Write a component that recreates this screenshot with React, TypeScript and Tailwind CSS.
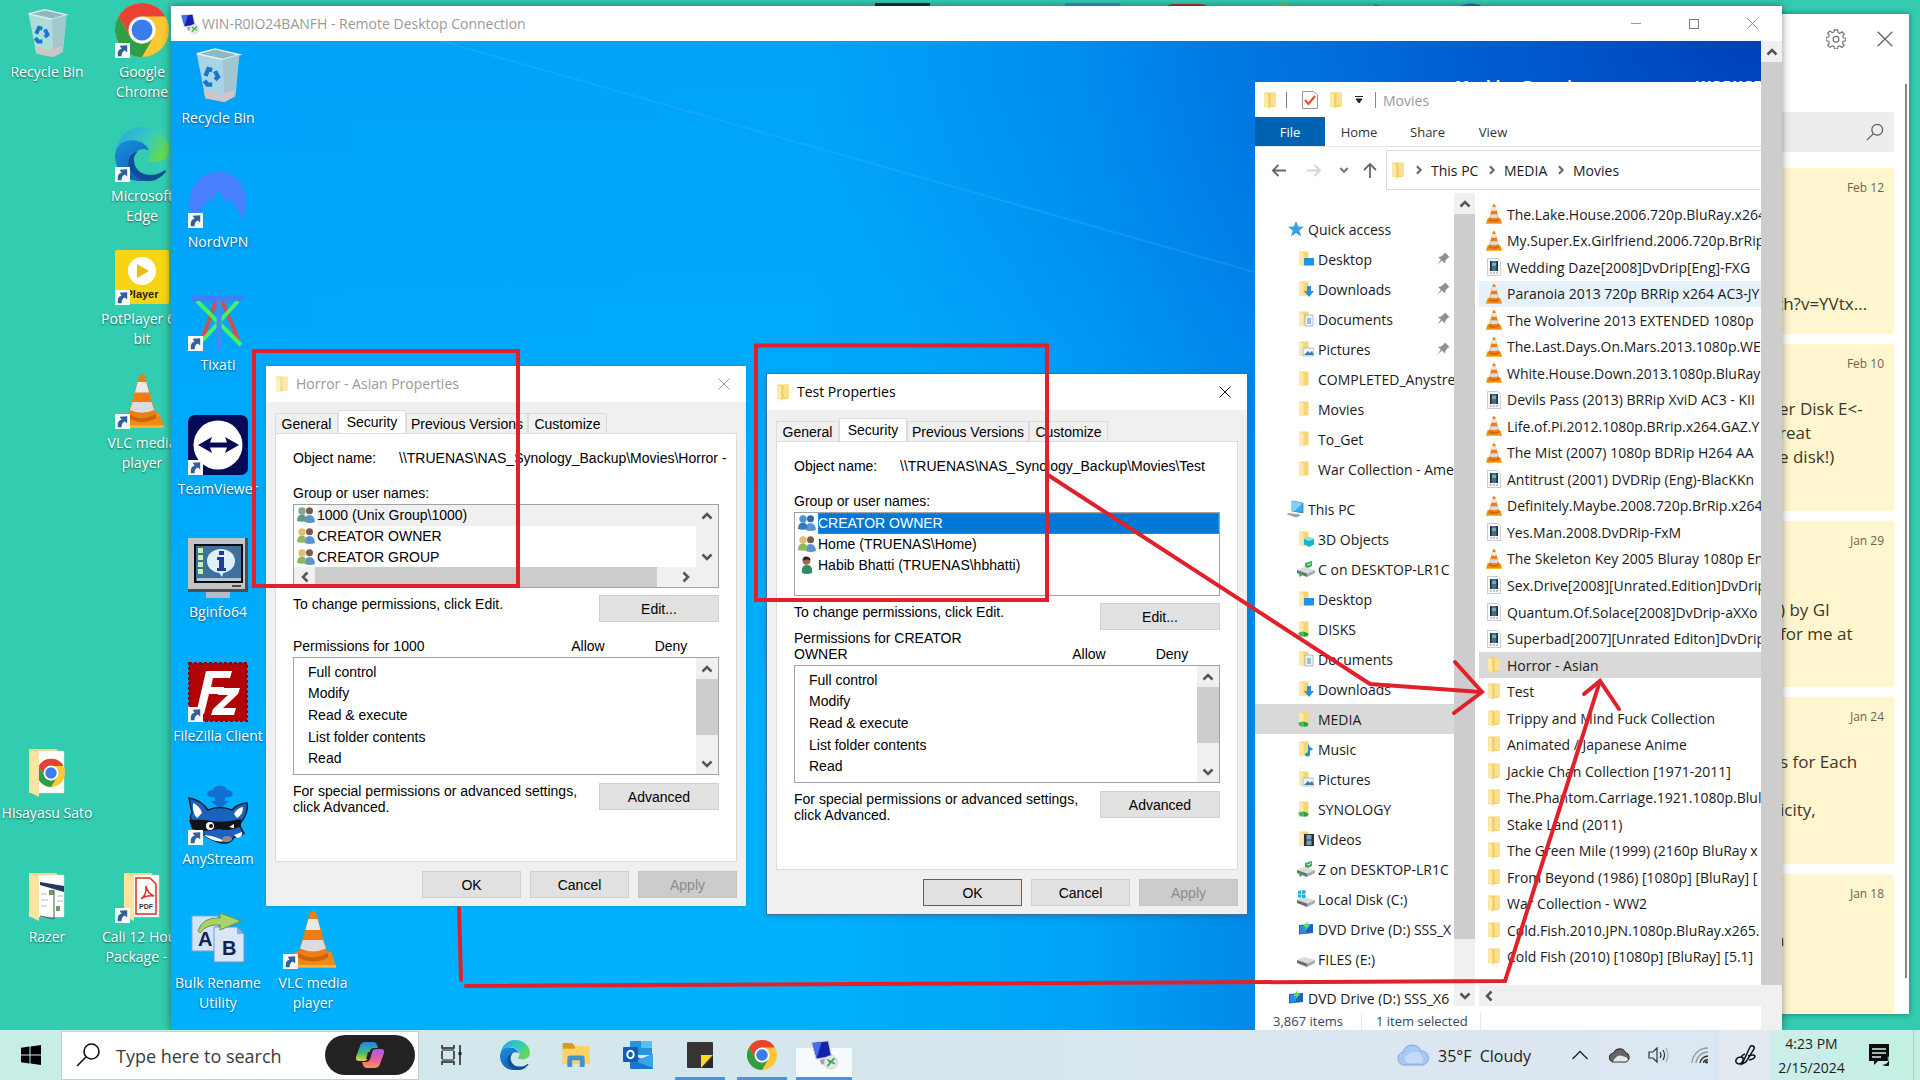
import React from "react";

const RED = "#e0212b";

/* ---------- icons ---------- */

function Folder({ className = "w-4 h-4" }: { className?: string }) {
  return (
    <svg viewBox="0 0 16 16" className={className} aria-hidden="true">
      <path d="M2 0.500h11v12.500l-1.500 1H2z" fill="#f3d06a" />
      <path d="M8 1h5v12H8z" fill="#fbe18c" />
      <path d="M2 0.500l4.500 2v13.200l-4.500-2.200z" fill="#fdeaa8" />
      <path d="M6.500 2.500v13" stroke="#e3bd52" strokeWidth="0.700" />
    </svg>
  );
}

function Cone({ className = "w-4 h-5" }: { className?: string }) {
  return (
    <svg viewBox="0 0 48 60" className={className} aria-hidden="true">
      <path d="M5 43h38l5 16H0z" fill="#f08a12" />
      <path d="M0 57h48v3H0z" fill="#ffb43a" />
      <path d="M9 44q15 10 30 0l1 5q-16 9-32 0z" fill="#c9640c" />
      <path d="M21 1.500q3-2 6 0l12 43q-15 8-30 0z" fill="#ee7d12" />
      <path d="M19.200 9h9.600l3 11.500H16.200z" fill="#e9e9ea" />
      <path d="M13.500 31h21l3 9q-13.500 6-27 0z" fill="#dcdcde" />
    </svg>
  );
}

function AviFile() {
  return (
    <svg viewBox="0 0 16 18" className="w-4 h-[18px]" aria-hidden="true">
      <path d="M1.500 0.500h10l3 3v14h-13z" fill="#fbfbfb" stroke="#b9c0c8" strokeWidth="0.800" />
      <path d="M4 3h8v10H4z" fill="#3c6f93" />
      <path d="M4 3h1.500v10H4zM10.500 3H12v10h-1.500z" fill="#23282e" />
      <path d="M6 5h4v3H6z" fill="#79a7bf" />
      <path d="M4 15h8" stroke="#8a8f95" strokeDasharray="2 1" />
    </svg>
  );
}

function Chrome({ className = "w-9 h-9" }: { className?: string }) {
  return (
    <svg viewBox="0 0 48 48" className={className} aria-hidden="true">
      <circle cx="24" cy="24" r="24" fill="#fcc934" />
      <path d="M24 12h20.800A24 24 0 0 0 3.200 12l10.400 18z" fill="#ea4335" />
      <path d="M3.200 12A24 24 0 0 0 24 48l10.400-18A12 12 0 0 1 13.600 30z" fill="#2f9e44" />
      <circle cx="24" cy="24" r="12" fill="#fff" />
      <circle cx="24" cy="24" r="9.300" fill="#3b7ded" />
    </svg>
  );
}

function Edge({ className = "w-8 h-8", id }: { className?: string; id: string }) {
  return (
    <svg viewBox="0 0 48 48" className={className} aria-hidden="true">
      <defs>
        <linearGradient id={id + "a"} x1="0" y1="0" x2="1" y2="0.500">
          <stop offset="0" stopColor="#29a8e6" />
          <stop offset="0.600" stopColor="#35c9c0" />
          <stop offset="1" stopColor="#63d957" />
        </linearGradient>
        <linearGradient id={id + "b"} x1="0" y1="0" x2="0.600" y2="1">
          <stop offset="0" stopColor="#1a8fe0" />
          <stop offset="1" stopColor="#0f5fb6" />
        </linearGradient>
      </defs>
      <path d="M1 22C2 9 12 0 24 0c14 0 24 10 24 20 0 7-5 11-12 11-5 0-8-1-7-3 3-3 3-8 0-11C22 8 6 11 1 22z" fill={"url(#" + id + "a)"} />
      <path d="M0 25C1 15 9 11 17 12c7 0 12 5 13 9-7-4-14 1-13 9 1 9 9 15 18 15-4 2-8 3-12 3C9 48 0 38 0 25z" fill={"url(#" + id + "b)"} />
      <path d="M20 22c-5 5-5 13 2 18 7 4 15 3 21-1 2-1 3 0 2 1-4 5-9 8-15 8-12-1-19-9-18-18 1-5 4-7 8-8z" fill="#0c4f95" />
    </svg>
  );
}

function RecycleBin({ className }: { className: string }) {
  return (
    <svg viewBox="0 0 48 58" className={className} aria-hidden="true">
      <path d="M2 8l9 46 20 4 11-6 4-42-24-5z" fill="#c5dde2" fillOpacity="0.850" />
      <path d="M2 8l19-5 25 6-17 5z" fill="#8fb8bf" stroke="#e3f1f4" strokeWidth="1.500" />
      <path d="M29 14l17-5-5 43-10 6z" fill="#9fc2c9" fillOpacity="0.800" />
      <path d="M9 46l19 4 13-5-1 8-10 5-19-4z" fill="#cfc6c6" />
      <g fill="none" stroke="#1478cc" strokeWidth="4.500">
        <path d="M11 31l3-7 4 1" />
        <path d="M21 26l3 6-3 3" />
        <path d="M18 40h-5l-3-4" />
      </g>
    </svg>
  );
}

function NordVpn() {
  return (
    <svg viewBox="0 0 60 60" className="w-[60px] h-[60px]" aria-hidden="true">
      <path d="M5 52C-4 30 6 4 30 4s34 26 25 48L43 30l-4 6-9-15-5 13-3-4z" fill="#4a80ff" />
    </svg>
  );
}

function Tixati() {
  return (
    <svg viewBox="0 0 60 60" className="w-[60px] h-[60px]" aria-hidden="true">
      <g strokeWidth="4" fill="none">
        <path d="M28 10L13 52M34 10l16 38" stroke="#d2504a" />
        <path d="M9 10l44 44M50 10L14 50" stroke="#49f067" />
        <path d="M31 8v50" stroke="#3f8cf5" strokeWidth="5" />
      </g>
      <path d="M4 4h52v6H4z" fill="#3d82f3" />
    </svg>
  );
}

function TeamViewer() {
  return (
    <svg viewBox="0 0 60 60" className="w-[60px] h-[60px]" aria-hidden="true">
      <rect width="60" height="60" rx="7" fill="#040a55" />
      <circle cx="30" cy="30" r="24.500" fill="#fff" />
      <path d="M10 30l14-8-2 5.500h17L37 22l14 8-14 8 2-5.500H22l2 5.500z" fill="#040a55" />
    </svg>
  );
}

function BgInfo() {
  return (
    <svg viewBox="0 0 60 60" className="w-[60px] h-[60px]" aria-hidden="true">
      <path d="M0 0h60v54H0z" fill="#4a4f55" />
      <path d="M0 0h57v51H0z" fill="#c4c4c4" />
      <path d="M6 6h49v39H6z" fill="#0b0b0c" />
      <path d="M8 8h45v35H8z" fill="#3e709d" />
      <path d="M9 40h44v3H9z" fill="#b9c6d0" />
      <path d="M10 10h5v5h-5zM10 17h5v5h-5zM10 24h5v5h-5zM10 31h5v5h-5z" fill="#c7f2b0" />
      <ellipse cx="33" cy="23" rx="14" ry="12" fill="#dff0fb" />
      <path d="M30 33l4 6 2-6z" fill="#dff0fb" />
      <path d="M31 13h5v4h-5zM29 19h7v11h2v3h-9v-3h2v-8h-2z" fill="#1c3f94" />
      <path d="M44 48h9" stroke="#4b4b4b" strokeWidth="2" />
      <path d="M18 54h24v6H18z" fill="#b4bcc4" />
    </svg>
  );
}

function FileZilla() {
  return (
    <svg viewBox="0 0 60 60" className="w-[60px] h-[60px]" aria-hidden="true">
      <rect x="1" y="1" width="58" height="58" fill="#b00406" />
      <rect x="1" y="1" width="58" height="58" fill="none" stroke="#8e0407" strokeWidth="3" strokeDasharray="3 2" />
      <path d="M18 9h26l-2 7H25l-2 9h13l-2 7H21l-5 20H8z" fill="#fff" />
      <path d="M32 26h20l-2 6-15 14h13l-2 7H23l2-6 15-14H30z" fill="#fff" />
    </svg>
  );
}

function AnyStream() {
  return (
    <svg viewBox="0 0 60 60" className="w-[60px] h-[60px]" aria-hidden="true">
      <path d="M19 10a6 6 0 0 1 6-5 8 8 0 0 1 14 0 6 6 0 0 1 6 5q-3 3-8 2v4h4l-9 8-9-8h4v-4q-5 1-8-2z" fill="#146fd2" />
      <path d="M1 13q12 2 19 12 12-5 24 0Q49 19 59 18q2 10-8 22l5 8q-6 5-10 4-4 9-16 5-12-4-20-12Q-1 33 4 28z" fill="#1b62bd" stroke="#15202e" strokeWidth="1.500" />
      <path d="M5 18q7 3 9 10l-5 5q-5-5-4-15zM55 22q-6 1-9 7l3 4q6-3 6-11z" fill="#fff" />
      <path d="M1 35q15-1 22 1 15 2 30-2v7q-12 6-22 3-18 4-27 0z" fill="#131417" />
      <circle cx="22" cy="41" r="4" fill="#fff" />
      <circle cx="23" cy="41" r="2" fill="#131417" />
      <path d="M41 42l5-3v4z" fill="#fff" />
      <path d="M16 50q12 1 20 6-10 2-20-6zM46 50l8-3q1 5-5 6z" fill="#fff" />
      <ellipse cx="39" cy="54" rx="5" ry="3" fill="#8e8a8a" />
    </svg>
  );
}

function BulkRename() {
  return (
    <svg viewBox="0 0 60 60" className="w-[60px] h-[60px]" aria-hidden="true">
      <path d="M4 7h26v35H4z" fill="#d3e3f8" stroke="#7fa7d6" />
      <path d="M26 18h23l7 7v28H26z" fill="#d9e6fa" stroke="#6f95c9" />
      <path d="M49 18v7h7z" fill="#87b0e2" />
      <text x="10" y="37" fontFamily="Liberation Sans" fontWeight="700" fontSize="20" fill="#14224e">A</text>
      <text x="34" y="46" fontFamily="Liberation Sans" fontWeight="700" fontSize="20" fill="#14224e">B</text>
      <path d="M10 22Q14 8 32 9V4l21 8-21 9v-5Q18 15 12 24z" fill="#a9d36a" stroke="#6f9440" />
    </svg>
  );
}

function PotPlayer() {
  return (
    <svg viewBox="0 0 54 54" className="w-[54px] h-[54px]" aria-hidden="true">
      <rect width="54" height="54" rx="2" fill="#f7d514" />
      <circle cx="27" cy="21" r="14" fill="#fff" />
      <path d="M22 14l12 7-12 7z" fill="#e8bf10" />
      <text x="27" y="48" textAnchor="middle" fontFamily="Liberation Sans" fontWeight="700" fontSize="11" fill="#2a2508">Player</text>
    </svg>
  );
}

function BigFolder({ kind }: { kind: "chrome" | "docs" | "pdf" }) {
  return (
    <svg viewBox="0 0 54 54" className="mt-1 w-[54px] h-[54px]" aria-hidden="true">
      <path d="M9 3h28v44H9z" fill="#f3d583" />
      <path d="M18 5h26v42H18z" fill="#fdfdfb" stroke="#d9d9d2" strokeWidth="0.500" />
      {kind === "chrome" && (
        <g>
          <circle cx="31" cy="27" r="14" fill="#fcc934" />
          <path d="M31 20h12.500A14 14 0 0 0 18.900 20L25 31z" fill="#e34133" />
          <path d="M18.900 20A14 14 0 0 0 31 41l6-10A7 7 0 0 1 25 31z" fill="#2f9e44" />
          <circle cx="31" cy="27" r="7.500" fill="#fff" />
          <circle cx="31" cy="27" r="5.700" fill="#3b7ded" />
        </g>
      )}
      {kind === "docs" && (
        <g>
          <path d="M20 12l24 4v6l-24-7z" fill="#1d3a5c" />
          <path d="M29 20h5v5h-5zM36 36h4v5h-4z" fill="#6d9c68" />
          <path d="M21 24h6M21 30h7M21 36h6M37 26h6M37 31h6" stroke="#b7bec7" />
          <path d="M20 46l14 3V20" stroke="#4c5a68" fill="none" />
        </g>
      )}
      {kind === "pdf" && (
        <g>
          <path d="M21 8h14l6 6v30H21z" fill="#fff" stroke="#dd2c25" strokeWidth="1.500" />
          <path d="M26 29q6-4 5-13 2 8 8 10-8-1-13 3z" fill="none" stroke="#dd2c25" strokeWidth="1.500" />
          <text x="31" y="39" textAnchor="middle" fontFamily="Liberation Sans" fontWeight="700" fontSize="7" fill="#333">PDF</text>
        </g>
      )}
      <path d="M9 3l10 5v43L9 46z" fill="#fbe3a0" />
    </svg>
  );
}

function RdpIcon({ className = "w-5 h-5" }: { className?: string }) {
  return (
    <svg viewBox="0 0 28 30" className={className} aria-hidden="true">
      <path d="M0 1.500L18.500 0l3.500 17-17 3z" fill="#c3c9d6" />
      <path d="M1.500 2.500L17.500 1l3 15-14.500 2.500z" fill="#1420b0" />
      <path d="M1.500 2.500L11 1.600 6 18z" fill="#4a6de8" />
      <path d="M9 20l8-1 2 4-8 2z" fill="#9aa3ad" />
      <circle cx="20.500" cy="22.500" r="7" fill="#e3e9e4" stroke="#b6bcb8" strokeWidth="0.600" />
      <path d="M17 19.500l3.500 3-3.500 4M24.500 18.500L21 21.500l3.500 3" stroke="#3aa544" strokeWidth="1.800" fill="none" />
    </svg>
  );
}

function Chevron({ dir, className = "w-3 h-3", color = "#555" }: { dir: "up" | "down" | "left" | "right"; className?: string; color?: string }) {
  const d = { up: "M1.500 8.500L6 4l4.500 4.500", down: "M1.500 3.500L6 8l4.500-4.500", left: "M8.500 1.500L4 6l4.500 4.500", right: "M3.500 1.500L8 6l-4.500 4.500" }[dir];
  return (
    <svg viewBox="0 0 12 12" className={className} aria-hidden="true">
      <path d={d} fill="none" stroke={color} strokeWidth="2.500" />
    </svg>
  );
}

function CloseX({ size = "w-3 h-3", color }: { size?: string; color: string }) {
  return (
    <svg viewBox="0 0 12 12" className={size} aria-hidden="true">
      <path d="M0.500 0.500l11 11M11.500 0.500l-11 11" stroke={color} strokeWidth="1" />
    </svg>
  );
}

function People({ tone }: { tone: "blend" | "group" | "single" | "blue" }) {
  const left = { blend: "#5b9a8e", group: "#8fb65a", single: "#2f8a63", blue: "#2f7cc0" }[tone];
  const head = { blend: "#8ba58f", group: "#e0bd7c", single: "#9a6a4a", blue: "#4f93cc" }[tone];
  if (tone === "single")
    return (
      <svg viewBox="0 0 18 18" className="w-[18px] h-[18px]" aria-hidden="true">
        <path d="M4 17q-1-8 5-8t5 8q-5 2-10 0z" fill={left} />
        <circle cx="8.500" cy="5" r="3.800" fill={head} />
        <path d="M4.500 5q0-5 4-4.500t4 4q-4-2-8 .5z" fill="#2b2320" />
      </svg>
    );
  return (
    <svg viewBox="0 0 18 18" className="w-[18px] h-[18px]" aria-hidden="true">
      <circle cx="12.500" cy="4.800" r="3.500" fill={tone === "blue" ? "#2c67a3" : "#7a5a48"} />
      <path d="M7.500 16q0-7 5-7t5.500 7q-5 2-10.500 0z" fill="#5f93cf" />
      <circle cx="5" cy="5" r="3.700" fill={head} />
      <path d="M0 15q0-6.500 5-6.500t4 6.500q-4 1.500-9 0z" fill={left} />
    </svg>
  );
}

function Pin() {
  return (
    <svg viewBox="0 0 14 14" className="w-3.5 h-3.5" aria-hidden="true">
      <path d="M9 0.500L13.500 5l-1.500.8-2.500 2.700-.5 3L5.800 8.600 1 13l3.800-5.400L2 5l3-.5L8 2z" fill="#8c8f93" />
    </svg>
  );
}

type NavKind = "star" | "folder" | "desktop" | "downloads" | "documents" | "pictures" | "pc" | "cube" | "netdrive" | "share" | "music" | "videos" | "windisk" | "dvd" | "disk";

function NavIcon({ kind }: { kind: NavKind }) {
  if (kind === "star")
    return (
      <svg viewBox="0 0 16 16" className="w-4 h-4" aria-hidden="true">
        <path d="M8 0l2.200 5.500 5.800.2-4.600 3.700 1.800 6.100L8 12l-5 3.500 1.600-6L0 5.700l5.800-.2z" fill="#35a2e4" />
      </svg>
    );
  if (kind === "pc")
    return (
      <svg viewBox="0 0 18 18" className="w-[18px] h-[18px]" aria-hidden="true">
        <path d="M5 1l11 2v10L5 11z" fill="#35aef0" stroke="#4c6f88" strokeWidth="0.800" />
        <path d="M5 1l11 2-9 8.400L5 11z" fill="#7fd0fa" />
        <path d="M1 13l10 1 3 1.500-5 2-9-3z" fill="#93a7b5" />
      </svg>
    );
  if (kind === "disk" || kind === "windisk" || kind === "netdrive")
    return (
      <svg viewBox="0 0 18 18" className="w-[18px] h-[18px]" aria-hidden="true">
        <path d="M0 10l7-3 11 3-8 3.500z" fill="#d9dcdf" />
        <path d="M0 10l10 3.500v3.500L0 13z" fill="#6a6e73" />
        <path d="M10 13.500l8-3.500v3l-8 4z" fill="#a9adb1" />
        {kind === "windisk" && <path d="M1 1l3-.4v3.200H1zM4.700.5L8.500 0v3.800H4.700zM1 4.500h3v3.200L1 7.300zM4.700 4.500h3.800v3.800l-3.800-.5z" fill="#12b0e6" />}
        {kind === "netdrive" && <path d="M8 3l7-2v5l-4 2-3-1zM1 12l6 2-4 3z" fill="#3eaf4a" />}
        {kind === "netdrive" && <path d="M10 4l2 1 2-2" stroke="#eef" fill="none" />}
      </svg>
    );
  if (kind === "dvd")
    return (
      <svg viewBox="0 0 16 16" className="w-4 h-4" aria-hidden="true">
        <path d="M1 4l14-1v9l-14 1.500z" fill="#1d63c4" />
        <path d="M2 5l6-.4v7.700l-6 .5z" fill="#2f8ce0" />
        <path d="M10 0l-5 6h3l-1 4 5-6H9z" fill="#4ee06a" />
      </svg>
    );
  return (
    <svg viewBox="0 0 16 16" className="w-4 h-4" aria-hidden="true">
      <path d="M1 0.500h9.500v14H1z" fill="#f5d673" />
      <path d="M1 0.500l4.500 2v13L1 13.500z" fill="#fdeaa8" />
      {kind === "desktop" && <path d="M6 7h10v7.500H6z" fill="#1d93e6" />}
      {kind === "downloads" && <path d="M9 5h4v5h3l-5 6-5-6h3z" fill="#2c8edb" />}
      {kind === "documents" && (
        <g>
          <path d="M7 4h8v11H7z" fill="#eef3f7" stroke="#93a4b2" strokeWidth="0.700" />
          <path d="M9 8h4M9 10h4M9 12h4" stroke="#4c88b8" />
        </g>
      )}
      {kind === "pictures" && (
        <g>
          <path d="M5 7h11v8H5z" fill="#e9f3fa" stroke="#9ab2c4" strokeWidth="0.700" />
          <path d="M6 14l4-4 2 2 2-2 2 4z" fill="#3d7ab0" />
        </g>
      )}
      {kind === "cube" && (
        <g>
          <path d="M6 8l5-2 5 2v5.500l-5 2.500-5-2.500z" fill="#19b3d8" />
          <path d="M6 8l5 2 5-2-5-2z" fill="#8be6f5" />
        </g>
      )}
      {kind === "share" && (
        <g>
          <path d="M0 12q5-3 10 0v3.500H2z" fill="#49b94f" />
          <path d="M6 11l5 2-5 3z" fill="#2f9a3b" />
        </g>
      )}
      {kind === "music" && <path d="M10 3q1 3 5 5-1 2-3 1v4.500a2.500 2 0 1 1-2-2z" fill="#1492dd" />}
      {kind === "videos" && (
        <g>
          <path d="M6 3h10v12H6z" fill="#2b323a" />
          <path d="M8.500 4h5v4.500h-5zM8.500 9.500h5V14h-5z" fill="#7c9fc4" />
        </g>
      )}
    </svg>
  );
}

/* ---------- desktop shortcuts ---------- */

type Shortcut = { label: string; icon: React.ReactNode; link?: boolean; row: number };

function ShortcutArrow() {
  return (
    <svg viewBox="0 0 16 16" className="absolute bottom-0 left-0 w-[15px] h-[15px]" aria-hidden="true">
      <path d="M0 0h16v16H0z" fill="#f7f9fb" />
      <path d="M3 14q-1-7 4-8L5 3l8-.5V10L10.500 8Q7 9 7 14z" fill="#345f9f" />
    </svg>
  );
}

function ShortcutColumn({ items, iconBox, className }: { items: Shortcut[]; iconBox: string; className: string }) {
  const rows: (Shortcut | null)[] = Array.from({ length: 8 }, (_, i) => items.find((s) => s.row === i) ?? null);
  return (
    <div className={"absolute grid h-[988px] w-28 grid-rows-8 text-center text-[14px] leading-[20px] text-white " + className}>
      {rows.map((s, i) =>
        s ? (
          <button key={i} type="button" className="flex min-w-0 flex-col items-center justify-start">
            <span className={"relative flex shrink-0 items-center justify-center " + iconBox}>
              {s.icon}
              {s.link && <ShortcutArrow />}
            </span>
            <span className="whitespace-pre pt-1 [text-shadow:0_1px_2px_rgba(0,0,0,.55)]">{s.label}</span>
          </button>
        ) : (
          <span key={i} />
        ),
      )}
    </div>
  );
}

const outerA: Shortcut[] = [
  { row: 0, label: "Recycle Bin", icon: <RecycleBin className="mt-1 w-[43px] h-[50px]" /> },
  { row: 6, label: "Hisayasu Sato", icon: <BigFolder kind="chrome" /> },
  { row: 7, label: "Razer", icon: <BigFolder kind="docs" /> },
];
const outerB: Shortcut[] = [
  { row: 0, label: "Google\nChrome", icon: <Chrome className="w-[54px] h-[54px]" />, link: true },
  { row: 1, label: "Microsoft\nEdge", icon: <Edge id="deskEdge" className="w-[54px] h-[54px]" />, link: true },
  { row: 2, label: "PotPlayer 64\nbit", icon: <PotPlayer />, link: true },
  { row: 3, label: "VLC media\nplayer", icon: <Cone className="w-11 h-[54px]" />, link: true },
  { row: 7, label: "Cali 12 Hour\nPackage - S", icon: <BigFolder kind="pdf" />, link: true },
];
const innerA: Shortcut[] = [
  { row: 0, label: "Recycle Bin", icon: <RecycleBin className="w-12 h-[56px]" /> },
  { row: 1, label: "NordVPN", icon: <NordVpn />, link: true },
  { row: 2, label: "Tixati", icon: <Tixati />, link: true },
  { row: 3, label: "TeamViewer", icon: <TeamViewer />, link: true },
  { row: 4, label: "Bginfo64", icon: <BgInfo /> },
  { row: 5, label: "FileZilla Client", icon: <FileZilla />, link: true },
  { row: 6, label: "AnyStream", icon: <AnyStream />, link: true },
  { row: 7, label: "Bulk Rename\nUtility", icon: <BulkRename /> },
];
const innerB: Shortcut[] = [{ row: 7, label: "VLC media\nplayer", icon: <Cone className="w-[46px] h-[58px]" />, link: true }];

/* ---------- properties dialogs ---------- */

type DialogProps = {
  title: string;
  path: string;
  active: boolean;
  subject: string;
  users: { name: string; tone: "blend" | "group" | "single" | "blue" }[];
  className: string;
};

function ScrollColumn({ thumb }: { thumb: boolean }) {
  return (
    <div className="flex w-[22px] shrink-0 flex-col items-center bg-[#f0f0f0]">
      <span className="flex h-[21px] items-center"><Chevron dir="up" /></span>
      {thumb && <span className="h-14 w-full bg-[#cdcdcd]" />}
      <span className="mt-auto flex h-[21px] items-center"><Chevron dir="down" /></span>
    </div>
  );
}

const dialogButton = "h-[27px] border border-[#cfcfcf] bg-[#e1e1e1] text-center";

function PropertiesDialog({ title, path, active, subject, users, className }: DialogProps) {
  const tabs = [
    { name: "General", w: "w-[63px]" },
    { name: "Security", w: "w-[68px]" },
    { name: "Previous Versions", w: "w-[122px]" },
    { name: "Customize", w: "w-[79px]" },
  ];
  return (
    <section
      aria-label={title}
      className={
        "absolute flex h-[540px] w-[480px] flex-col bg-[#f0f0f0] font-['Liberation_Sans',Arial,sans-serif] text-[14px] leading-4 text-black " +
        (active ? "shadow-[0_0_0_1px_#3f6f95,0_2px_8px_rgba(0,0,0,.2)] " : "shadow-[0_0_3px_rgba(0,0,0,.15)] ") +
        className
      }
    >
      <header className={"flex h-9 items-center bg-white pl-2 pr-4 font-['Open_Sans',sans-serif] text-[14px] " + (active ? "text-black" : "text-[#999]")}>
        <Folder className={active ? "w-[17px] h-[17px]" : "w-[17px] h-[17px] opacity-70"} />
        <h2 className="ml-[5px]">{title}</h2>
        <button type="button" aria-label="Close" className="ml-auto"><CloseX color={active ? "#111" : "#999"} /></button>
      </header>
      <div className="flex h-[31px] items-end px-[9px]" role="tablist">
        {tabs.map((t) => (
          <button
            key={t.name}
            type="button"
            role="tab"
            aria-selected={t.name === "Security"}
            className={
              "whitespace-nowrap border border-[#dcdcdc] " +
              t.w +
              (t.name === "Security" ? " h-[23px] border-b-0 bg-white" : " h-[20px] border-b-0 pt-px")
            }
          >
            {t.name}
          </button>
        ))}
      </div>
      <div className="mx-[9px] flex h-[429px] flex-col border border-[#dcdcdc] bg-white px-[17px] pt-[14px]">
        <p className="flex h-5 items-center whitespace-nowrap">
          <span className="w-[106px] shrink-0">Object name:</span>
          {path}
        </p>
        <p className="mt-[15px] flex h-5 items-center">Group or user names:</p>
        <div className="mt-px flex h-[84px] flex-col border border-[#9fa3a8]">
          <div className="flex h-[62px]">
            <ul className="grid flex-1 grid-rows-3">
              {users.map((u, i) => (
                <li key={u.name} className="flex items-center pl-[3px]">
                  <People tone={u.tone} />
                  <span
                    className={
                      "ml-[2px] flex h-full flex-1 items-center " +
                      (i === 0 ? (active ? "bg-[#0078d7] text-white outline-1 -outline-offset-1 outline-dotted outline-[#c77b28]" : "bg-[#f0f0f0]") : "")
                    }
                  >
                    {u.name}
                  </span>
                </li>
              ))}
            </ul>
            {!active && <ScrollColumn thumb={false} />}
          </div>
          {!active && (
            <div className="flex h-5 items-center bg-[#f0f0f0]">
              <span className="flex w-[21px] justify-center"><Chevron dir="left" /></span>
              <span className="h-full w-[342px] bg-[#cdcdcd]" />
              <span className="ml-[23px]"><Chevron dir="right" /></span>
            </div>
          )}
        </div>
        <div className="mt-[7px] flex justify-between">
          <span className="leading-[18px]">To change permissions, click Edit.</span>
          <button type="button" className={dialogButton + " w-[120px]"}>Edit...</button>
        </div>
        <div className="flex h-8 items-end">
          <span className="w-[190px]">{subject}</span>
          <span className="w-[210px] text-center">Allow</span>
          <span className="-ml-16 w-[84px] text-center">Deny</span>
        </div>
        <div className="mt-[3px] flex h-[118px] border border-[#9fa3a8]">
          <ul className="mb-[5px] mt-[3px] grid flex-1 grid-rows-5 pl-[14px]">
            {["Full control", "Modify", "Read & execute", "List folder contents", "Read"].map((p) => (
              <li key={p} className="flex items-center">{p}</li>
            ))}
          </ul>
          <ScrollColumn thumb />
        </div>
        <div className="mt-2 flex justify-between">
          <p className="w-[300px]">For special permissions or advanced settings, click Advanced.</p>
          <button type="button" className={dialogButton + " w-[120px]"}>Advanced</button>
        </div>
      </div>
      <footer className="flex gap-[9px] px-[9px] pt-[9px]">
        <button type="button" className={"ml-auto w-[99px] " + (active ? "h-[27px] border border-[#0078d7] bg-[#e1e1e1]" : dialogButton)}>OK</button>
        <button type="button" className={"w-[99px] " + dialogButton}>Cancel</button>
        <button type="button" disabled className="h-[27px] w-[99px] border border-[#c4c4c4] bg-[#cccccc] text-[#8b8b8b]">Apply</button>
      </footer>
    </section>
  );
}

/* ---------- file explorer ---------- */

const quick: { name: string; kind: NavKind; pin?: boolean }[] = [
  { name: "Desktop", kind: "desktop", pin: true },
  { name: "Downloads", kind: "downloads", pin: true },
  { name: "Documents", kind: "documents", pin: true },
  { name: "Pictures", kind: "pictures", pin: true },
  { name: "COMPLETED_Anystre", kind: "folder" },
  { name: "Movies", kind: "folder" },
  { name: "To_Get", kind: "folder" },
  { name: "War Collection - Ame", kind: "folder" },
];
const thisPc: { name: string; kind: NavKind; pin?: boolean }[] = [
  { name: "3D Objects", kind: "cube" },
  { name: "C on DESKTOP-LR1C", kind: "netdrive" },
  { name: "Desktop", kind: "desktop" },
  { name: "DISKS", kind: "share" },
  { name: "Documents", kind: "documents" },
  { name: "Downloads", kind: "downloads" },
  { name: "MEDIA", kind: "share" },
  { name: "Music", kind: "music" },
  { name: "Pictures", kind: "pictures" },
  { name: "SYNOLOGY", kind: "share" },
  { name: "Videos", kind: "videos" },
  { name: "Z on DESKTOP-LR1C", kind: "netdrive" },
  { name: "Local Disk (C:)", kind: "windisk" },
  { name: "DVD Drive (D:) SSS_X", kind: "dvd" },
  { name: "FILES (E:)", kind: "disk" },
];

const files: [string, "v" | "a" | "f"][] = [
  ["The.Lake.House.2006.720p.BluRay.x264", "v"],
  ["My.Super.Ex.Girlfriend.2006.720p.BrRip", "v"],
  ["Wedding Daze[2008]DvDrip[Eng]-FXG", "a"],
  ["Paranoia 2013 720p BRRip x264 AC3-JY", "v"],
  ["The Wolverine 2013 EXTENDED 1080p", "v"],
  ["The.Last.Days.On.Mars.2013.1080p.WE", "v"],
  ["White.House.Down.2013.1080p.BluRay", "v"],
  ["Devils Pass (2013) BRRip XviD AC3 - KII", "a"],
  ["Life.of.Pi.2012.1080p.BRrip.x264.GAZ.Y", "v"],
  ["The Mist (2007) 1080p BDRip H264 AA", "v"],
  ["Antitrust (2001) DVDRip (Eng)-BlacKKn", "a"],
  ["Definitely.Maybe.2008.720p.BrRip.x264", "v"],
  ["Yes.Man.2008.DvDRip-FxM", "a"],
  ["The Skeleton Key 2005 Bluray 1080p En", "v"],
  ["Sex.Drive[2008][Unrated.Edition]DvDrip", "a"],
  ["Quantum.Of.Solace[2008]DvDrip-aXXo", "a"],
  ["Superbad[2007][Unrated Editon]DvDrip", "a"],
  ["Horror - Asian", "f"],
  ["Test", "f"],
  ["Trippy and Mind Fuck Collection", "f"],
  ["Animated / Japanese Anime", "f"],
  ["Jackie Chan Collection [1971-2011]", "f"],
  ["The.Phantom.Carriage.1921.1080p.Blul", "f"],
  ["Stake Land (2011)", "f"],
  ["The Green Mile (1999) (2160p BluRay x", "f"],
  ["From Beyond (1986) [1080p] [BluRay] [", "f"],
  ["War Collection - WW2", "f"],
  ["Cold.Fish.2010.JPN.1080p.BluRay.x265.", "f"],
  ["Cold Fish (2010) [1080p] [BluRay] [5.1]", "f"],
];

function NavRow({ name, kind, pin, top }: { name: string; kind: NavKind; pin?: boolean; top?: boolean }) {
  return (
    <li className={"flex h-[30px] items-center whitespace-nowrap " + (top ? "pl-8 " : "pl-[42px] ") + (name === "MEDIA" ? "bg-[#d9d9d9]" : "")}>
      <span className="flex w-[18px] shrink-0 justify-center"><NavIcon kind={kind} /></span>
      <span className="ml-[3px]">{name}</span>
      {pin && <span className="ml-auto mr-1"><Pin /></span>}
    </li>
  );
}

function Explorer() {
  return (
    <section aria-label="Movies" className="absolute bottom-0 left-[1084px] right-0 top-[41px] flex flex-col overflow-hidden bg-white text-[14px] text-[#1a1a1a]">
      <header className="flex h-[35px] shrink-0 items-center pl-[7px] pt-px text-[#999]">
        <Folder className="w-[17px] h-[17px]" />
        <span className="ml-[7px] h-4 w-px bg-[#777]" />
        <svg viewBox="0 0 16 18" className="ml-[15px] w-4 h-[18px]" aria-hidden="true">
          <path d="M0.500 0.500h11l4 3.500v13.500H0.500z" fill="#fafafa" stroke="#999" />
          <path d="M3 9l3.500 4L13 5" fill="none" stroke="#d4532b" strokeWidth="2" />
        </svg>
        <Folder className="ml-2.5 w-[17px] h-[17px]" />
        <svg viewBox="0 0 8 8" className="ml-2.5 w-2 h-2" aria-hidden="true"><path d="M0 0.500h8M1 3h6L4 7z" stroke="#222" strokeWidth="1" fill="#222" /></svg>
        <span className="ml-3 h-4 w-px bg-[#888]" />
        <h2 className="ml-[7px]">Movies</h2>
      </header>
      <nav className="flex h-[30px] shrink-0 border-b border-[#e6e6e6] text-[13px] text-[#333]">
        <button type="button" className="w-[70px] bg-[#0063b1] pt-[2px] text-white">File</button>
        <button type="button" className="w-[68px] pt-[2px]">Home</button>
        <button type="button" className="w-[69px] pt-[2px]">Share</button>
        <button type="button" className="w-[62px] pt-[2px]">View</button>
      </nav>
      <div className="flex h-[46px] shrink-0 items-center pl-4">
        <svg viewBox="0 0 16 14" className="w-[15px] h-[13px]" aria-hidden="true"><path d="M16 7H2M8 1L2 7l6 6" fill="none" stroke="#666" strokeWidth="2" /></svg>
        <svg viewBox="0 0 16 14" className="ml-[21px] w-[15px] h-[13px]" aria-hidden="true"><path d="M0 7h14M8 1l6 6-6 6" fill="none" stroke="#d4d4d4" strokeWidth="2" /></svg>
        <Chevron dir="down" className="ml-[17px] w-2.5 h-2.5" color="#777" />
        <svg viewBox="0 0 14 16" className="ml-[14px] w-3.5 h-4" aria-hidden="true"><path d="M7 16V2M1 8l6-6 6 6" fill="none" stroke="#666" strokeWidth="1.800" /></svg>
        <div className="ml-[9px] flex h-10 flex-1 items-center border border-r-0 border-[#d9d9d9] pl-[3px]">
          <Folder className="w-[17px] h-[17px]" />
          <span className="ml-[7px]"><Chevron dir="right" className="w-2.5 h-2.5" color="#666" /></span>
          <span className="ml-[7px] w-[49px]">This PC</span>
          <span className="ml-[7px]"><Chevron dir="right" className="w-2.5 h-2.5" color="#666" /></span>
          <span className="ml-[7px] w-[45px]">MEDIA</span>
          <span className="ml-[7px]"><Chevron dir="right" className="w-2.5 h-2.5" color="#666" /></span>
          <span className="ml-[7px]">Movies</span>
        </div>
      </div>
      <div className="flex min-h-0 flex-1">
        <ul className="w-[199px] shrink-0 overflow-hidden pt-[21px]">
          <NavRow name="Quick access" kind="star" top />
          {quick.map((n) => <NavRow key={n.name} {...n} />)}
          <li className="h-2.5" />
          <NavRow name="This PC" kind="pc" top />
          {thisPc.map((n) => <NavRow key={n.name} {...n} />)}
          <li className="h-[9px]" />
          <NavRow name="DVD Drive (D:) SSS_X6" kind="dvd" top />
        </ul>
        <div className="flex w-[21px] shrink-0 flex-col items-center bg-[#f0f0f0]">
          <span className="flex h-[21px] items-center"><Chevron dir="up" /></span>
          <span className="h-[725px] w-full bg-[#cdcdcd]" />
          <span className="mt-auto flex h-[21px] items-center"><Chevron dir="down" /></span>
        </div>
        <div className="ml-1 flex min-w-0 flex-1 flex-col pt-2">
          <ul className="grid h-[769px] grid-rows-[repeat(29,minmax(0,1fr))]">
            {files.map(([name, kind]) => (
              <li
                key={name}
                className={
                  "flex items-center overflow-hidden whitespace-nowrap pl-[6px] " +
                  (name.startsWith("Paranoia") ? "bg-[#e5f1fb]" : name === "Horror - Asian" ? "bg-[#d9d9d9]" : "")
                }
              >
                <span className="flex w-[18px] shrink-0 justify-center">
                  {kind === "v" ? <Cone /> : kind === "a" ? <AviFile /> : <Folder className="w-[17px] h-[17px]" />}
                </span>
                <span className="ml-1">{name}</span>
              </li>
            ))}
          </ul>
          <div className="mt-auto flex h-[21px] items-center bg-[#f0f0f0] pl-1"><Chevron dir="left" /></div>
        </div>
      </div>
      <footer className="flex h-6 shrink-0 items-center bg-white pl-[18px] pt-2 text-[13px] text-[#33475f]">
        <span className="w-[89px] border-r border-[#e8e8e8]">3,867 items</span>
        <span className="ml-[14px] border-r border-[#e8e8e8] pr-3">1 item selected</span>
      </footer>
    </section>
  );
}

/* ---------- remote desktop window ---------- */

function Wallpaper() {
  return (
    <svg viewBox="0 0 1590 989" preserveAspectRatio="none" className="absolute inset-0 h-full w-full" aria-hidden="true">
      <defs>
        <linearGradient id="wpBase" x1="0" y1="0" x2="1" y2="0">
          <stop offset="0" stopColor="#00b0fd" />
          <stop offset="0.400" stopColor="#00b2fc" />
          <stop offset="0.580" stopColor="#00a2f5" />
          <stop offset="0.690" stopColor="#0087e6" />
          <stop offset="1" stopColor="#0070d8" />
        </linearGradient>
        <linearGradient id="wpTop" x1="0" y1="0" x2="0" y2="1">
          <stop offset="0" stopColor="#0090f2" stopOpacity="0.450" />
          <stop offset="0.500" stopColor="#0096f8" stopOpacity="0.250" />
          <stop offset="0.800" stopColor="#00a0ff" stopOpacity="0" />
        </linearGradient>
        <radialGradient id="wpCorner" cx="1" cy="0" r="0.600">
          <stop offset="0" stopColor="#0040b8" />
          <stop offset="0.300" stopColor="#0056cc" stopOpacity="0.850" />
          <stop offset="1" stopColor="#0084f0" stopOpacity="0" />
        </radialGradient>
      </defs>
      <path d="M0 0h1590v989H0z" fill="url(#wpBase)" />
      <path d="M0 0h1590v989H0z" fill="url(#wpTop)" />
      <path d="M0 0h1590v989H0z" fill="url(#wpCorner)" />
      <path d="M270 0L1090 233" stroke="#6cc4ff" strokeOpacity="0.180" strokeWidth="2" />
    </svg>
  );
}

function RemoteDesktop() {
  return (
    <section aria-label="Remote Desktop Connection" className="absolute bottom-0 left-[171px] right-[138px] top-[6px] flex flex-col bg-white shadow-[0_0_8px_rgba(0,0,0,.45)]">
      <header className="flex h-[35px] shrink-0 items-center pl-[9px] text-[14px] text-[#999]">
        <RdpIcon />
        <h1 className="ml-[2px]">WIN-R0IO24BANFH - Remote Desktop Connection</h1>
        <div className="ml-auto flex items-center pr-6">
          <button type="button" aria-label="Minimize" className="h-px w-2.5 bg-[#999]" />
          <button type="button" aria-label="Maximize" className="ml-12 h-2.5 w-2.5 border border-[#777]" />
          <button type="button" aria-label="Close" className="ml-12"><CloseX size="w-[11px] h-[11px]" color="#888" /></button>
        </div>
      </header>
      <div className="flex min-h-0 flex-1">
        <div className="relative min-w-0 flex-1 overflow-hidden">
          <Wallpaper />
          <p className="absolute right-0 top-[34px] flex w-[306px] justify-between whitespace-nowrap text-[15px] font-bold leading-5 text-white">
            <span>Machine Domain:</span>
            <span className="w-[65px]">WORKGR</span>
          </p>
          <ShortcutColumn items={innerA} iconBox="h-[60px] w-[60px]" className="-left-[9px] top-[3px]" />
          <ShortcutColumn items={innerB} iconBox="h-[60px] w-[60px]" className="left-[86px] top-[3px]" />
          <PropertiesDialog
            title="Horror - Asian Properties"
            path="\\TRUENAS\NAS_Synology_Backup\Movies\Horror -"
            subject="Permissions for 1000"
            active={false}
            users={[
              { name: "1000 (Unix Group\\1000)", tone: "blend" },
              { name: "CREATOR OWNER", tone: "group" },
              { name: "CREATOR GROUP", tone: "group" },
            ]}
            className="left-[95px] top-[325px]"
          />
          <PropertiesDialog
            title="Test Properties"
            path="\\TRUENAS\NAS_Synology_Backup\Movies\Test"
            subject="Permissions for CREATOR OWNER"
            active
            users={[
              { name: "CREATOR OWNER", tone: "blue" },
              { name: "Home (TRUENAS\\Home)", tone: "group" },
              { name: "Habib Bhatti (TRUENAS\\hbhatti)", tone: "single" },
            ]}
            className="left-[596px] top-[333px]"
          />
          <Explorer />
        </div>
        <div className="flex w-[21px] shrink-0 flex-col items-center bg-[#f0f0f0]">
          <span className="flex h-[21px] items-center"><Chevron dir="up" /></span>
          <span className="mb-[45px] w-full flex-1 bg-[#cdcdcd]" />
        </div>
      </div>
    </section>
  );
}

/* ---------- sticky notes list ---------- */

const notes = [
  { date: "Feb 12", top: "pt-[94px]", lines: ["ch?v=YVtx..."], inset: "pl-[75px]" },
  { date: "Feb 10", top: "pt-[23px]", lines: ["er Disk E<-", "reat", "e disk!)"], inset: "pl-[79px]" },
  { date: "Jan 29", top: "pt-[47px]", lines: [") by GI", "for me at"], inset: "pl-[80px]" },
  { date: "Jan 24", top: "pt-[23px]", lines: ["s for Each", "", "icity,"], inset: "pl-[80px]" },
  { date: "Jan 18", top: "pt-0", lines: ["", "a"], inset: "pl-[75px]" },
];

function StickyNotes() {
  return (
    <section aria-label="Sticky Notes" className="absolute bottom-4 right-[11px] top-[14px] flex w-[209px] flex-col overflow-hidden bg-white shadow-[0_0_6px_rgba(0,0,0,.4)]">
      <header className="flex h-[98px] shrink-0 items-start justify-end gap-[31px] pr-4 pt-[15px]">
        <svg viewBox="0 0 24 24" className="w-5 h-5" aria-hidden="true" fill="none" stroke="#666" strokeWidth="1.300">
          <path d="M10 1h4l.5 3.300 2 .9L19.200 3.300 22 6l-2 2.700.8 2L24 11.200v3l-3.300.5-.9 2 2 2.600-2.800 2.800-2.600-2-2 .8L13.900 24h-3.800l-.5-3.100-2-.8-2.700 2L2 19.300l2-2.700-.8-2L0 14v-3.800l3.200-.5.8-2L2 5l2.800-2.700 2.700 2 2-.8z" />
          <circle cx="12" cy="12.300" r="3.500" />
        </svg>
        <button type="button" aria-label="Close"><CloseX size="w-4 h-4 mt-[2px]" color="#666" /></button>
      </header>
      <label className="mr-[15px] flex h-10 shrink-0 items-center bg-[#ededed] pr-2.5">
        <input aria-label="Search notes" className="min-w-0 flex-1 bg-transparent outline-none" />
        <svg viewBox="0 0 20 20" className="w-[18px] h-[18px]" aria-hidden="true" fill="none" stroke="#555" strokeWidth="1.300">
          <circle cx="12.500" cy="7.500" r="6" />
          <path d="M8 12l-7 7" />
        </svg>
      </label>
      <div className="mr-[15px] mt-4 flex h-[872px] shrink-0 flex-col gap-2.5">
        {notes.map((n) => (
          <article key={n.date} className={"min-h-0 flex-1 bg-[#fff5cf] pt-[10px] " + n.inset}>
            <p className="pr-2.5 text-right text-[12px] leading-5 text-[#6b6650]">{n.date}</p>
            <div className={"text-[17px] leading-6 text-[#3b3828] " + n.top}>
              {n.lines.map((l, i) => (
                <p key={i} className="h-6 whitespace-nowrap">{l}</p>
              ))}
            </div>
          </article>
        ))}
      </div>
      <span className="absolute bottom-9 right-[2px] top-[70px] w-[2px] bg-[#858585]" />
    </section>
  );
}

/* ---------- taskbar ---------- */

function TaskIcon({ children, open, current, label }: { children: React.ReactNode; open?: boolean; current?: boolean; label: string }) {
  return (
    <button type="button" aria-label={label} className="relative flex h-full w-[62px] items-center justify-center">
      {current && <span className="absolute inset-x-[3px] bottom-0 h-8 bg-[#f6fafd]" />}
      <span className="relative">{children}</span>
      {(open || current) && <span className={"absolute bottom-0 h-[3px] bg-[#4795e0] " + (current ? "inset-x-[3px]" : "inset-x-[6px]")} />}
    </button>
  );
}

function Taskbar() {
  return (
    <footer className="relative flex h-[50px] shrink-0 items-center bg-[linear-gradient(90deg,#c6eee4_0,#d2e8ec_22%,#d6e6ee_50%,#dce6f0_75%,#d9e7f2_100%)] text-[#222]">
      <button type="button" aria-label="Start" className="flex h-full w-[61px] items-center justify-center">
        <svg viewBox="0 0 20 20" className="w-5 h-5" aria-hidden="true"><path d="M0 2.800L8.500 1.500V9.500H0zM9.500 1.400L20 0v9.500H9.500zM0 10.500h8.500v8L0 17.200zM9.500 10.500H20V20L9.500 18.600z" fill="#000" /></svg>
      </button>
      <div className="mr-[2px] flex h-[49px] w-[358px] shrink-0 items-center border border-[#c9ced2] bg-white pl-3.5 pr-[3px]">
        <svg viewBox="0 0 24 24" className="w-6 h-6 shrink-0" aria-hidden="true" fill="none" stroke="#111" strokeWidth="1.600"><circle cx="15.500" cy="8.500" r="7.500" /><path d="M10 14L1 23" /></svg>
        <input aria-label="Search" placeholder="Type here to search" className="ml-4 min-w-0 flex-1 bg-transparent pt-[2px] text-[18px] outline-none placeholder:text-[#3a3a3a]" />
        <span className="flex h-10 w-[90px] shrink-0 items-center justify-center rounded-full bg-[#242122]">
          <svg viewBox="0 0 28 28" className="w-7 h-7" aria-hidden="true">
            <defs>
              <linearGradient id="cpA" x1="0" y1="0" x2="0" y2="1"><stop offset="0" stopColor="#1d86ee" /><stop offset="0.600" stopColor="#46c06a" /><stop offset="1" stopColor="#e8d43c" /></linearGradient>
              <linearGradient id="cpB" x1="0" y1="0" x2="0" y2="1"><stop offset="0" stopColor="#a45bf0" /><stop offset="0.600" stopColor="#f0609a" /><stop offset="1" stopColor="#f89a4c" /></linearGradient>
            </defs>
            <path d="M10 1h7q3 0 4 3l1 3h-4q-3 0-4 3l-2 7q-1 3-4 3H3q-4 0-3-4L4 5q1-4 6-4z" fill="url(#cpA)" />
            <path d="M18 27h-7q-3 0-4-3l-1-3h4q3 0 4-3l2-7q1-3 4-3h5q4 0 3 4l-4 11q-1 4-6 4z" fill="url(#cpB)" />
            <path d="M12 11h4l-2 7h-4z" fill="#242122" />
          </svg>
        </span>
      </div>
      <TaskIcon label="Task view">
        <svg viewBox="0 0 22 20" className="w-[22px] h-5" aria-hidden="true" fill="none" stroke="#222" strokeWidth="1.500">
          <path d="M1 0v3h12V0M1 20v-3h12v3M1 6v8M13 6v8M19 0v20" />
          <path d="M1 5h12M1 15h12" stroke="#777" strokeWidth="2" />
          <path d="M17.500 7h3v3h-3z" fill="#222" stroke="none" />
        </svg>
      </TaskIcon>
      <TaskIcon label="Microsoft Edge"><Edge id="taskEdge" className="w-[30px] h-[30px] ml-[2px]" /></TaskIcon>
      <TaskIcon label="File Explorer">
        <svg viewBox="0 0 28 26" className="w-7 h-[25px]" aria-hidden="true">
          <path d="M0 1q0-1 1-1h9l3 3v4H0z" fill="#d99a1f" />
          <path d="M0 6h12l2-3h13q1 0 1 1v18H0z" fill="#fcd262" />
          <path d="M5 25v-9q0-3 3-3h12q3 0 3 3v9h-5v-7h-8v7z" fill="#4391d6" />
        </svg>
      </TaskIcon>
      <TaskIcon label="Outlook">
        <svg viewBox="0 0 30 28" className="w-[30px] h-7" aria-hidden="true">
          <path d="M8 0h20q1 0 1 1v13H7V1q0-1 1-1z" fill="#2a93dd" />
          <path d="M18 0h11v7H18z" fill="#55c0f2" />
          <path d="M7 13l12 5 11-5v14q0 1-1 1H8q-1 0-1-1z" fill="#1976ca" />
          <path d="M30 13v14L12 20z" fill="#38a3e6" />
          <rect y="6" width="15" height="15" rx="1" fill="#0f5fb4" />
          <ellipse cx="7.500" cy="13.500" rx="3.200" ry="3.800" fill="none" stroke="#fff" strokeWidth="2" />
        </svg>
      </TaskIcon>
      <TaskIcon label="Sticky Notes" open>
        <svg viewBox="0 0 26 26" className="w-[26px] h-[26px]" aria-hidden="true"><path d="M0 1q0-1 1-1h24q1 0 1 1v12L14 26H1q-1 0-1-1z" fill="#363534" /><path d="M14 13h12L14 26z" fill="#ffd91c" /><path d="M26 13v13H14z" fill="#2b2a29" /></svg>
      </TaskIcon>
      <TaskIcon label="Google Chrome" open><Chrome className="w-[30px] h-[30px]" /></TaskIcon>
      <TaskIcon label="Remote Desktop" current><RdpIcon className="w-[27px] h-[30px]" /></TaskIcon>

      <div className="ml-auto flex h-full items-center">
        <svg viewBox="0 0 32 22" className="w-8 h-[22px]" aria-hidden="true"><path d="M7 21a6.500 6.500 0 0 1-1-12.800A9.500 9.500 0 0 1 24 7a7 7 0 0 1 1 14z" fill="#a9c8f2" stroke="#7ea6dd" /><path d="M10 19a5 5 0 0 1 2-9 8 8 0 0 1 13 9z" fill="#c4daf8" /></svg>
        <span className="ml-[9px] w-[101px] whitespace-pre pt-px text-[16px]">35°F  Cloudy</span>
        <span className="ml-[33px]">
          <svg viewBox="0 0 16 10" className="w-4 h-2.5" aria-hidden="true"><path d="M0.500 9L8 1.500 15.500 9" fill="none" stroke="#222" strokeWidth="1.300" /></svg>
        </span>
        <svg viewBox="0 0 22 16" className="ml-[21px] w-[22px] h-4" aria-hidden="true"><path d="M5 15a4.500 4.500 0 0 1-.5-9A6.500 6.500 0 0 1 16.500 5.500 5 5 0 0 1 17 15z" fill="#666" stroke="#222" /><path d="M4 14q5-7 9-5 6 1 6 4l-2 1.500H5z" fill="#e8e8e8" /></svg>
        <svg viewBox="0 0 22 18" className="ml-[17px] w-[22px] h-[18px]" aria-hidden="true" fill="none" stroke="#333" strokeWidth="1.200"><path d="M1 6h4l4-4v14l-4-4H1zM12 6q2 3 0 6M15 4q3 5 0 10" /><path d="M18 2q4 7 0 14" stroke="#aaa" /></svg>
        <svg viewBox="0 0 18 18" className="ml-[21px] w-[18px] h-[18px]" aria-hidden="true" fill="none" strokeWidth="1.300"><path d="M1 17A16 16 0 0 1 17 2M5 17A12 12 0 0 1 17 6" stroke="#999" /><path d="M9 17q1-6 8-7M12.500 17q0-3 4.500-3.500" stroke="#333" /><circle cx="15.500" cy="16" r="1.500" fill="#333" /></svg>
        <span className="ml-[10px] flex h-full w-[51px] items-center justify-center bg-[#e2e9f1]">
          <svg viewBox="0 0 22 22" className="w-[22px] h-[22px]" aria-hidden="true" fill="none" stroke="#111" strokeWidth="1.500">
            <path d="M5 20q-4-1-3-4 1-3 5-3 3 0 2 3-1 4-4 4zM7 13q1-2 4-3" />
            <path d="M9 18L16 3q1-2 3-1t1 3l-8 13-4 2z" />
            <path d="M14 12q6-2 7 0 0 3-6 4" />
          </svg>
        </span>
        <div className="flex h-full items-center bg-[linear-gradient(90deg,#cdeeea,#c3efe2)]">
          <time className="w-[83px] pt-px text-center text-[14px] leading-6">4:23 PM<br />2/15/2024</time>
          <svg viewBox="0 0 20 22" className="ml-4 w-5 h-[22px]" aria-hidden="true"><path d="M0 0h20v17H9l-4 4v-4H0z" fill="#0c0c0c" /><path d="M3 5h14M3 9h14M3 13h9" stroke="#d7eee9" strokeWidth="1.300" /><path d="M19 13a5 5 0 1 1-6 7 5 5 0 0 0 6-7z" fill="#0c0c0c" stroke="#d7eee9" strokeWidth="0.800" /></svg>
          <span className="ml-6 mr-1.5 h-full w-px bg-[#a9cfc8]" />
        </div>
      </div>
    </footer>
  );
}

/* ---------- hand-drawn marks ---------- */

function Markup() {
  return (
    <svg viewBox="0 0 1920 1080" className="pointer-events-none absolute left-0 top-0 h-[1080px] w-[1920px]" aria-hidden="true">
      <g fill="none" stroke={RED} strokeWidth="4" strokeLinecap="round">
        <path d="M254 351h264v235H254z" />
        <path d="M756 345.500h291V600H756z" />
        <path d="M1048 475L1370 684L1481 692" />
        <path d="M1455 662L1482 692L1454 713" />
        <path d="M459 908L461 980M466 986L1505 981L1600 681" />
        <path d="M1584 694L1600 681L1619 709" />
      </g>
    </svg>
  );
}

export default function App() {
  return (
    <div className="relative flex h-screen flex-col overflow-hidden bg-[#32ccb0] font-['Open_Sans','Noto_Sans',sans-serif]">
      <main className="relative min-h-0 flex-1 overflow-hidden">
        <svg viewBox="0 0 1920 8" className="absolute left-0 top-0 h-2 w-[1920px]" aria-hidden="true">
          <path d="M875 3h55v5h-55z" fill="#123034" />
          <path d="M1065 3h55v5h-55z" fill="#3d92d8" />
          <path d="M1164 8q4-4 10-4h26q6 0 10 4z" fill="#b5352e" />
          <path d="M1268 8q14-8 28 0z" fill="#a6bd3a" />
          <path d="M1374 4l14 4h-12z" fill="#3f9a2e" />
          <path d="M1456 8q15-9 30 0z" fill="#2e6bd0" />
        </svg>
        <ShortcutColumn items={outerA} iconBox="h-14 w-[58px]" className="-left-[9px] top-[2px]" />
        <ShortcutColumn items={outerB} iconBox="h-14 w-[54px]" className="left-[86px] top-[2px]" />
        <StickyNotes />
        <RemoteDesktop />
      </main>
      <Taskbar />
      <Markup />
    </div>
  );
}
